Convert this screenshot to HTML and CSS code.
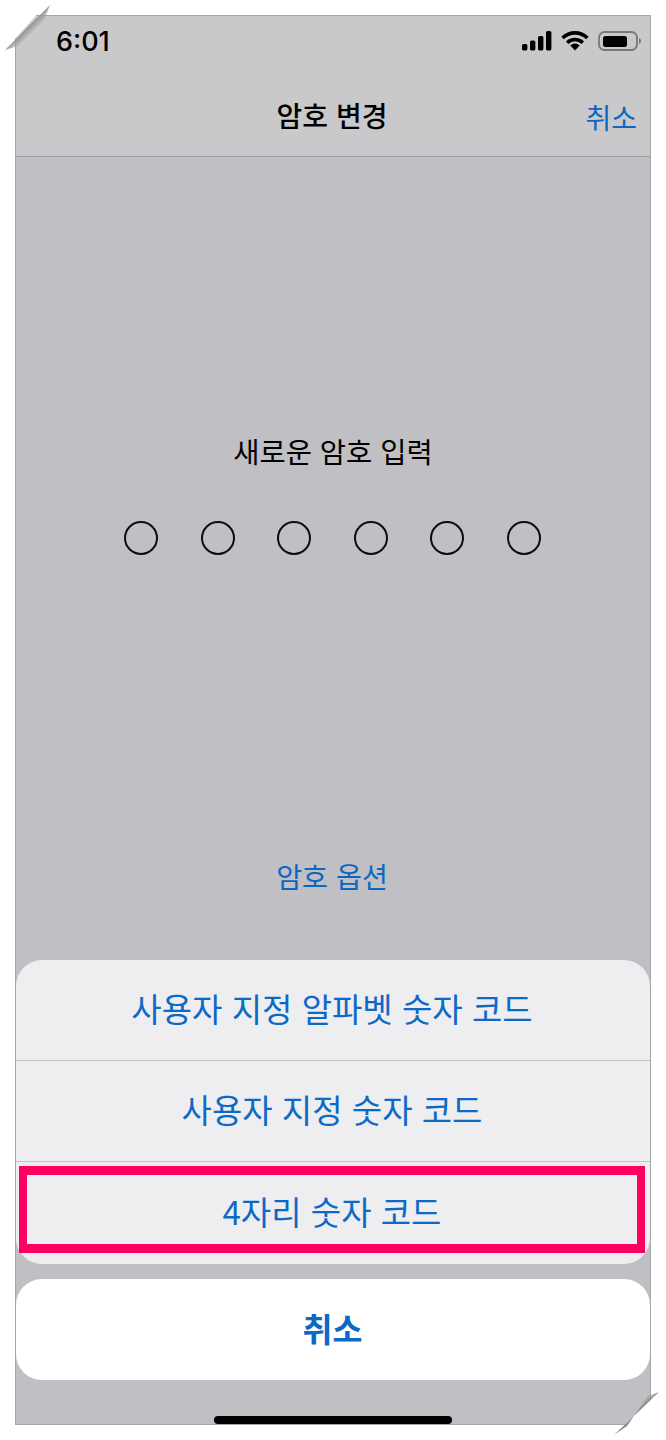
FILE: index.html
```html
<!DOCTYPE html>
<html lang="ko">
<head>
    <meta charset="UTF-8">
    <meta name="viewport" content="width=device-width, initial-scale=1.0">
    <title>암호 변경</title>
    <link rel="stylesheet" href="styles.css">
</head>
<body>
    <div class="phone">
        <header class="top">
            <div class="status">
                <span class="time">6:01</span>
                <div class="status-icons">
                    <svg width="30" height="20" viewBox="0 0 30 20">
                        <rect x="0" y="13" width="5.4" height="6.5" rx="1.6" fill="#000"/>
                        <rect x="8" y="9.5" width="5.4" height="10" rx="1.6" fill="#000"/>
                        <rect x="16" y="5" width="5.4" height="14.5" rx="1.6" fill="#000"/>
                        <rect x="24" y="0" width="5.4" height="19.5" rx="1.6" fill="#000"/>
                    </svg>
                    <svg width="28" height="20" viewBox="0 0 28 20">
                        <path d="M1.6 7a17.6 17.6 0 0 1 24.8 0" fill="none" stroke="#000" stroke-width="3.6"/>
                        <path d="M6.2 11.8a11 11 0 0 1 15.6 0" fill="none" stroke="#000" stroke-width="3.6"/>
                        <path d="M14 19.6l-4.7-5a6.4 6.4 0 0 1 9.4 0z" fill="#000"/>
                    </svg>
                    <svg width="44" height="20" viewBox="0 0 44 20">
                        <rect x="1" y="1" width="38" height="18" rx="5.5" fill="none" stroke="#77777a" stroke-width="1.8"/>
                        <rect x="5" y="5" width="24" height="11" rx="2.5" fill="#000"/>
                        <path d="M41 7a3.2 3.2 0 0 1 0 6z" fill="#77777a"/>
                    </svg>
                </div>
            </div>
            <nav class="navbar">
                <span class="nav-title">암호 변경</span>
                <span class="nav-cancel">취소</span>
            </nav>
        </header>

        <main class="content">
            <p class="prompt">새로운 암호 입력</p>
            <div class="dots">
                <span class="dot"></span>
                <span class="dot"></span>
                <span class="dot"></span>
                <span class="dot"></span>
                <span class="dot"></span>
                <span class="dot"></span>
            </div>
            <p class="options-link">암호 옵션</p>
        </main>

        <section class="sheet">
            <div class="sheet-group">
                <div class="sheet-row">사용자 지정 알파벳 숫자 코드</div>
                <div class="sheet-row">사용자 지정 숫자 코드</div>
                <div class="sheet-row">4자리 숫자 코드</div>
            </div>
            <div class="sheet-cancel">취소</div>
        </section>

        <div class="home-bar"></div>
        <div class="highlight"></div>
    </div>

    <!-- 모서리 접힌 효과 -->
    <svg class="fold fold-tl" width="56" height="56" viewBox="0 0 56 56">
        <defs>
            <linearGradient id="foldShadeTl" gradientUnits="userSpaceOnUse" x1="27.5" y1="27.5" x2="35" y2="35">
                <stop offset="0" stop-color="#8a8a8a" stop-opacity="0.9"/>
                <stop offset="1" stop-color="#b8b8b8" stop-opacity="0"/>
            </linearGradient>
        </defs>
        <path d="M0 0H50L5 50V56H0Z" fill="#fff"/>
        <path d="M50 5L5 50L18 46L44 20Z" fill="url(#foldShadeTl)"/>
    </svg>
    <svg class="fold fold-br" width="56" height="56" viewBox="0 0 56 56">
        <defs>
            <linearGradient id="foldShadeBr" gradientUnits="userSpaceOnUse" x1="27" y1="29.5" x2="20" y2="22">
                <stop offset="0" stop-color="#7d7d7d" stop-opacity="0.9"/>
                <stop offset="1" stop-color="#b8b8b8" stop-opacity="0"/>
            </linearGradient>
        </defs>
        <path d="M49 8L4 51V56H56V8Z" fill="#fff"/>
        <path d="M49 8L4 51L17 42L38 12Z" fill="url(#foldShadeBr)"/>
    </svg>
</body>
</html>
```

FILE: styles.css
```css
* {
    box-sizing: border-box;
}
body {
    margin: 0;
    background-color: #fff;
    font-family: "Noto Sans CJK KR", "Noto Sans", sans-serif;
    position: relative;
    height: 1440px;
    overflow: hidden;
}
p {
    margin: 0;
}
.phone {
    position: absolute;
    left: 15px;
    top: 15px;
    width: 636px;
    height: 1410px;
    border: 1px solid #a6a6a8;
    background-color: #c0bfc4;
    display: flex;
    flex-direction: column;
}
.top {
    height: 141px;
    background-color: #c9c9cb;
    border-bottom: 1px solid #a2a2a5;
    flex-shrink: 0;
}
.status {
    height: 50px;
    padding: 0 8px 0 40px;
    display: flex;
    justify-content: space-between;
    align-items: center;
}
.time {
    font-family: Inter, sans-serif;
    font-weight: 500;
    font-size: 27px;
    color: #000;
    margin-top: 1px;
}
.status-icons {
    display: flex;
    align-items: center;
    gap: 9px;
}
.navbar {
    height: 90px;
    padding-right: 2px;
    display: flex;
    align-items: center;
    justify-content: center;
    position: relative;
}
.nav-title {
    font-size: 28px;
    font-weight: 500;
    color: #000;
    margin-top: 8px;
}
.nav-cancel {
    position: absolute;
    right: 13px;
    top: 31px;
    font-size: 28px;
    line-height: 40px;
    color: #0d66bf;
}
.content {
    flex: 1;
    display: flex;
    flex-direction: column;
    align-items: center;
    text-align: center;
}
.prompt {
    margin-top: 273px;
    font-size: 28.5px;
    line-height: 42px;
    color: #000;
}
.dots {
    display: flex;
    gap: 42.6px;
    margin-top: 49px;
    padding-right: 1px;
}
.dot {
    width: 34px;
    height: 34px;
    border: 2px solid #0c0c0e;
    border-radius: 50%;
}
.options-link {
    margin-top: 300px;
    padding-right: 2px;
    font-size: 28.2px;
    line-height: 42px;
    color: #0d66bf;
}
.sheet {
    position: absolute;
    left: 0;
    right: 0;
    top: 944px;
}
.sheet-group {
    border-radius: 26px;
    overflow: hidden;
    background-color: #eeeef1;
}
.sheet-row {
    height: 101px;
    padding: 0 2px 4px 0;
    display: flex;
    align-items: center;
    justify-content: center;
    font-size: 33px;
    color: #0d69c6;
    border-bottom: 1px solid #c2c2c5;
}
.sheet-row:last-child {
    height: 102px;
    border-bottom: none;
}
.sheet-cancel {
    height: 101px;
    padding: 0 1px 5px 0;
    margin-top: 15px;
    border-radius: 26px;
    background-color: #fff;
    display: flex;
    align-items: center;
    justify-content: center;
    font-size: 32.6px;
    font-weight: 700;
    color: #0d69c6;
}
.home-bar {
    position: absolute;
    left: 198px;
    bottom: 0;
    width: 238px;
    height: 8px;
    border-radius: 4px;
    background-color: #000;
}
.highlight {
    position: absolute;
    left: 3px;
    top: 1150px;
    width: 626px;
    height: 87px;
    border-style: solid;
    border-color: #fb0060;
    border-width: 9px 8px;
}
.fold {
    position: absolute;
}
.fold-tl {
    left: 0;
    top: 0;
}
.fold-br {
    right: 0;
    bottom: 0;
}
```
